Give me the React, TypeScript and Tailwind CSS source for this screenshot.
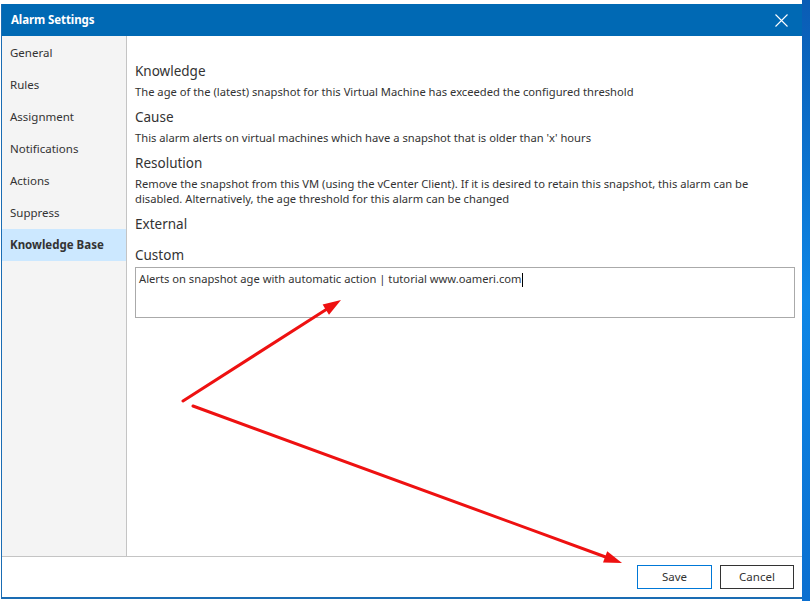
import React from "react";

const font = { fontFamily: '"Noto Sans", "Open Sans", sans-serif' };

const navItems = [
  "General",
  "Rules",
  "Assignment",
  "Notifications",
  "Actions",
  "Suppress",
  "Knowledge Base",
];

function Section({ title, children }: { title: string; children?: React.ReactNode }) {
  return (
    <div className="flex flex-col">
      <div className="text-[13.5px] leading-[20px] text-[#333]">{title}</div>
      {children ? <div className="text-[11.2px] leading-[15px] text-[#333] mt-[3px]">{children}</div> : null}
    </div>
  );
}

export default function App() {
  return (
    <div className="relative w-[810px] h-[601px] overflow-hidden bg-white flex" style={font}>
      <div className="w-[802px] flex flex-col">
        <div className="h-[4px] bg-white" />
        <div className="ml-[1px] h-[595px] flex flex-col border-l border-b-2 border-[#1a6cb3] bg-white">
          {/* title bar */}
          <div className="h-[32px] bg-[#0069b4] flex items-center justify-between pl-[9px] pr-[14px]">
            <span className="text-white font-bold text-[11.5px] tracking-[-0.1px]">Alarm Settings</span>
            <svg width="13" height="13" viewBox="0 0 13 13">
              <path d="M0.5 0.5 L12.5 12.5 M12.5 0.5 L0.5 12.5" stroke="white" strokeWidth="1.1" />
            </svg>
          </div>
          <div className="flex-1 flex">
            {/* sidebar */}
            <div className="w-[125px] bg-[#f4f4f4] border-r border-[#c4c4c4] flex flex-col pt-[1px]">
              {navItems.map((n) => (
                <div
                  key={n}
                  className={
                    "h-[32px] flex items-center pl-[8px] text-[11.5px] text-[#333] " +
                    (n === "Knowledge Base" ? "bg-[#cce8ff] font-bold" : "")
                  }
                >
                  {n}
                </div>
              ))}
            </div>
            {/* content */}
            <div className="flex-1 flex flex-col pl-[8px] pr-[7px] pt-[25px] gap-[8px]">
              <Section title="Knowledge">
                The age of the (latest) snapshot for this Virtual Machine has exceeded the configured threshold
              </Section>
              <Section title="Cause">
                This alarm alerts on virtual machines which have a snapshot that is older than 'x' hours
              </Section>
              <Section title="Resolution">
                Remove the snapshot from this VM (using the vCenter Client). If it is desired to retain this snapshot, this alarm can be
                <br />
                disabled. Alternatively, the age threshold for this alarm can be changed
              </Section>
              <div className="text-[13.5px] leading-[20px] text-[#333]">External</div>
              <div className="text-[13.5px] leading-[20px] text-[#333] mt-[3px]">Custom</div>
              <div className="h-[51px] border border-[#aaaaaa] px-[3px] pt-[3px] text-[11.2px] leading-[16px] text-[#333] -mt-[6px]">
                Alerts on snapshot age with automatic action | tutorial www.oameri.com
                <span className="inline-block w-[1px] h-[14px] bg-black align-middle" />
              </div>
            </div>
          </div>
          {/* footer */}
          <div className="h-[41px] border-t border-[#c4c4c4] flex justify-end gap-[8px] pr-[8px] pt-[8px]">
            <button className="w-[75px] h-[24px] border border-[#0078d7] bg-white text-[11.5px] text-[#333]">Save</button>
            <button className="w-[74px] h-[24px] border border-[#333] bg-white text-[11.5px] text-[#333]">Cancel</button>
          </div>
        </div>
      </div>
      <div className="flex-1 bg-gradient-to-b from-[#0a5cb4] via-[#0d86e6] to-[#0b6fd0]" />

      {/* red arrows overlay */}
      <svg className="absolute left-0 top-0 pointer-events-none" width="810" height="601" viewBox="0 0 810 601">
        <line x1="183" y1="401" x2="327" y2="309" stroke="#ee1111" strokeWidth="3" strokeLinecap="round" />
        <polygon points="341,300 329,314.8 322.6,304.6" fill="#ee1111" />
        <line x1="193" y1="406" x2="607" y2="557.5" stroke="#ee1111" strokeWidth="3" strokeLinecap="round" />
        <polygon points="622,563 603,562.4 607.2,551.2" fill="#ee1111" />
      </svg>
    </div>
  );
}
